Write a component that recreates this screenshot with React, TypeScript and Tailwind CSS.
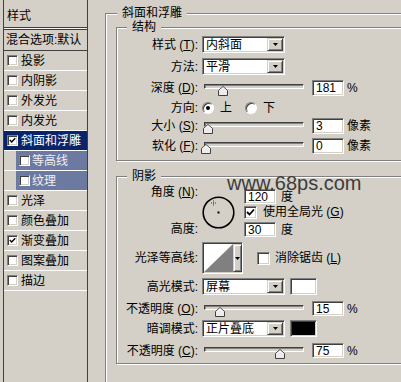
import React from "react";

const sunken =
  "border border-t-[#808080] border-l-[#808080] border-b-white border-r-white shadow-[inset_1px_1px_0_#404040,inset_-1px_-1px_0_#d4d0c8]";
const raised =
  "border border-t-[#d4d0c8] border-l-[#d4d0c8] border-b-[#404040] border-r-[#404040] shadow-[inset_1px_1px_0_#ffffff,inset_-1px_-1px_0_#808080]";

function Check({ size = 9 }: { size?: number }) {
  return (
    <svg width={size} height={size} viewBox="0 0 9 9" className="block">
      <path d="M1 4 L3.5 6.5 L8 1.5" fill="none" stroke="#000" strokeWidth="1.8" />
    </svg>
  );
}

function ListBox({ checked }: { checked?: boolean }) {
  return (
    <div className={`${sunken} w-[11px] h-[11px] bg-white shrink-0 flex items-center justify-center`}>
      {checked ? <Check size={7} /> : null}
    </div>
  );
}

function ListRow({
  label,
  checked,
  selected,
  sub,
}: {
  label: string;
  checked?: boolean;
  selected?: boolean;
  sub?: boolean;
}) {
  const inner = sub
    ? "ml-[12px] bg-[#6c7aa2] text-[#f0f0f0] pl-[3px] gap-[2px]"
    : selected
    ? "bg-[#0a246a] text-white pl-[3px] gap-[3px]"
    : "pl-[3px] gap-[3px]";
  return (
    <div className="h-[20px] border-b border-white flex">
      <div className={`flex-1 flex items-center leading-[14px] ${inner}`}>
        <ListBox checked={checked} />
        <span>{label}</span>
      </div>
    </div>
  );
}

function Label({ children }: { children: React.ReactNode }) {
  return <div className="w-[83px] shrink-0 text-right pr-[2px] leading-[14px] whitespace-nowrap">{children}</div>;
}

function Dropdown({ value }: { value: string }) {
  return (
    <div className={`${sunken} ml-[2px] w-[83px] h-[17px] bg-white flex items-stretch`}>
      <div className="flex-1 pl-[3px] leading-[14px] flex items-center">{value}</div>
      <div className={`${raised} w-[16px] my-[1px] mr-[1px] flex items-center justify-center bg-[#d4d0c8]`}>
        <svg width="5" height="3" viewBox="0 0 5 3" className="block">
          <path d="M0 0 H5 L2.5 3 Z" fill="#000" />
        </svg>
      </div>
    </div>
  );
}

function Field({ value, h = 16, className = "" }: { value: string; h?: number; className?: string }) {
  return (
    <div
      className={`${sunken} w-[32px] bg-white pl-[3px] leading-[14px] flex items-center ${
        h === 16 ? "h-[16px]" : "h-[15px]"
      } ${className}`}
    >
      {value}
    </div>
  );
}

function Slider({ thumb }: { thumb: number }) {
  return (
    <div className="relative ml-[4px] w-[100px] h-full shrink-0">
      <div className="mt-[4px] h-[5px] border border-t-[#404040] border-l-[#404040] border-b-white border-r-white shadow-[inset_1px_1px_0_#808080]" />
      <svg
        width="10"
        height="10"
        viewBox="0 0 10 10"
        className="absolute top-[6px] block"
        style={{ left: thumb }}
      >
        <path d="M5 0.5 L9.5 4.5 V9.5 H0.5 V4.5 Z" fill="#ececec" stroke="#404040" strokeWidth="1" />
        <path d="M1.5 5 L5 1.8 L8.5 5" fill="none" stroke="#ffffff" strokeWidth="1" />
      </svg>
    </div>
  );
}

function Radio({ on }: { on?: boolean }) {
  return (
    <div className="w-[12px] h-[12px] rounded-full border border-t-[#808080] border-l-[#808080] border-b-white border-r-white shadow-[inset_1px_1px_0_#404040] bg-white flex items-center justify-center shrink-0">
      {on ? <div className="w-[4px] h-[4px] rounded-full bg-black" /> : null}
    </div>
  );
}

function Box({ checked, className = "" }: { checked?: boolean; className?: string }) {
  return (
    <div className={`${sunken} w-[13px] h-[13px] bg-white shrink-0 flex items-center justify-center ${className}`}>
      {checked ? <Check size={9} /> : null}
    </div>
  );
}

function Dial() {
  return (
    <svg width="33" height="33" viewBox="0 0 33 33" className="ml-[2px] mt-[7px] block shrink-0">
      <circle cx="16.5" cy="16.5" r="15.3" fill="none" stroke="#000" strokeWidth="1.6" />
      <rect x="15.5" y="15.5" width="2" height="2" fill="#000" />
      <path d="M11.5 4.5 V9.5 M9 7 H14" stroke="#404040" strokeWidth="1" strokeDasharray="1 1" />
    </svg>
  );
}

function Contour() {
  return (
    <div className={`${sunken} ml-[2px] w-[41px] h-[32px] bg-white flex`}>
      <svg width="29" height="28" viewBox="0 0 29 28" preserveAspectRatio="none" className="block mt-[1px] ml-[1px]">
        <rect width="29" height="28" fill="#fff" />
        <path d="M0 28 L29 0 V28 Z" fill="#808080" />
      </svg>
      <div className={`${raised} w-[9px] h-[28px] mt-[1px] flex items-center justify-center bg-[#d4d0c8]`}>
        <svg width="5" height="3" viewBox="0 0 5 3" className="block">
          <path d="M0 0 H5 L2.5 3 Z" fill="#000" />
        </svg>
      </div>
    </div>
  );
}

const group =
  "relative border-t border-l border-[#808080] shadow-[inset_1px_1px_0_#ffffff,1px_1px_0_#ffffff]";
const group2 =
  "relative border border-[#808080] shadow-[inset_1px_1px_0_#ffffff,1px_1px_0_#ffffff]";

export default function App() {
  return (
    <div
      className="relative w-[401px] h-[382px] bg-[#d4d0c8] overflow-hidden flex text-[12px] text-black"
      style={{ fontFamily: '"Liberation Sans", "Noto Sans CJK SC", sans-serif' }}
    >
      {/* left list */}
      <div className="ml-[3px] w-[85px] h-full shrink-0 border-x border-[#404040] flex flex-col">
        <div className="h-[27px] pl-[3px] pt-[9px] leading-[14px]">样式</div>
        <div className="h-[3px] border-y border-[#404040] bg-[#f4f4f4]" />
        <div className="h-[20px] pl-[2px] flex items-center leading-[14px] whitespace-nowrap">混合选项:默认</div>
        <div className="h-px bg-[#404040]" />
        <ListRow label="投影" />
        <ListRow label="内阴影" />
        <ListRow label="外发光" />
        <ListRow label="内发光" />
        <ListRow label="斜面和浮雕" checked selected />
        <ListRow label="等高线" sub />
        <ListRow label="纹理" sub />
        <ListRow label="光泽" />
        <ListRow label="颜色叠加" />
        <ListRow label="渐变叠加" checked />
        <ListRow label="图案叠加" />
        <ListRow label="描边" />
      </div>

      {/* right side */}
      <div className="flex-1 min-w-0">
        <div className={`${group} ml-[17px] mt-[13px] w-[320px] h-[400px]`}>
          <span className="absolute -top-[8px] left-[11px] px-[5px] bg-[#d4d0c8] leading-[14px]">斜面和浮雕</span>

          {/* 结构 */}
          <div className={`${group2} ml-[10px] mt-[13px] w-[320px]`}>
            <span className="absolute -top-[8px] left-[10px] px-[5px] bg-[#d4d0c8] leading-[14px]">结构</span>
            <div className="pt-[8px] pb-[6px]">
              <div className="h-[17px] flex items-center">
                <Label>
                  样式 (<u>T</u>):
                </Label>
                <Dropdown value="内斜面" />
              </div>
              <div className="mt-[5px] h-[17px] flex items-center">
                <Label>方法:</Label>
                <Dropdown value="平滑" />
              </div>
              <div className="mt-[5px] h-[16px] flex items-center">
                <Label>
                  深度 (<u>D</u>):
                </Label>
                <Slider thumb={14} />
                <Field value="181" className="ml-[8px]" />
                <span className="ml-[3px] leading-[14px]">%</span>
              </div>
              <div className="mt-[5px] h-[14px] flex items-center">
                <Label>方向:</Label>
                <div className="ml-[2px]">
                  <Radio on />
                </div>
                <span className="ml-[6px] leading-[14px]">上</span>
                <div className="ml-[13px]">
                  <Radio />
                </div>
                <span className="ml-[6px] leading-[14px]">下</span>
              </div>
              <div className="mt-[3px] h-[16px] flex items-center">
                <Label>
                  大小 (<u>S</u>):
                </Label>
                <Slider thumb={-1} />
                <Field value="3" className="ml-[8px]" />
                <span className="ml-[3px] leading-[14px]">像素</span>
              </div>
              <div className="mt-[4px] h-[16px] flex items-center">
                <Label>
                  软化 (<u>F</u>):
                </Label>
                <Slider thumb={-3} />
                <Field value="0" className="ml-[8px]" />
                <span className="ml-[3px] leading-[14px]">像素</span>
              </div>
            </div>
          </div>

          {/* 阴影 */}
          <div className={`${group2} ml-[10px] mt-[15px] w-[320px]`}>
            <span className="absolute -top-[8px] left-[10px] px-[5px] bg-[#d4d0c8] leading-[14px]">阴影</span>
            <div className="pt-[12px] pb-[5px]">
              <div className="flex h-[48px]">
                <div className="w-[83px] shrink-0 flex flex-col text-right pr-[2px] leading-[14px]">
                  <div className="-mt-[4px] h-[14px]">
                    角度 (<u>N</u>):
                  </div>
                  <div className="mt-auto mb-[1px] h-[14px]">高度:</div>
                </div>
                <Dial />
                <div className="ml-[9px] flex flex-col">
                  <div className="h-[15px] flex items-center">
                    <Field value="120" h={15} />
                    <span className="ml-[5px] leading-[14px]">度</span>
                  </div>
                  <div className="mt-[1px] h-[14px] flex items-center">
                    <Box checked />
                    <span className="ml-[6px] leading-[14px] whitespace-nowrap">
                      使用全局光 (<u>G</u>)
                    </span>
                  </div>
                  <div className="mt-[3px] h-[15px] flex items-center">
                    <Field value="30" h={15} />
                    <span className="ml-[5px] leading-[14px]">度</span>
                  </div>
                </div>
              </div>
              <div className="mt-[5px] h-[32px] flex items-center">
                <Label>光泽等高线:</Label>
                <Contour />
                <Box className="ml-[14px]" />
                <span className="ml-[5px] leading-[14px] whitespace-nowrap">
                  消除锯齿 (<u>L</u>)
                </span>
              </div>
              <div className="mt-[4px] h-[17px] flex items-center">
                <Label>高光模式:</Label>
                <Dropdown value="屏幕" />
                <div className={`${sunken} ml-[5px] w-[27px] h-[17px] bg-white`} />
              </div>
              <div className="mt-[6px] h-[15px] flex items-center">
                <Label>
                  不透明度 (<u>O</u>):
                </Label>
                <Slider thumb={11} />
                <Field value="15" h={15} className="ml-[8px]" />
                <span className="ml-[3px] leading-[14px]">%</span>
              </div>
              <div className="mt-[4px] h-[17px] flex items-center">
                <Label>暗调模式:</Label>
                <Dropdown value="正片叠底" />
                <div className={`${sunken} ml-[5px] w-[27px] h-[17px] bg-black`} />
              </div>
              <div className="mt-[6px] h-[15px] flex items-center">
                <Label>
                  不透明度 (<u>C</u>):
                </Label>
                <Slider thumb={71} />
                <Field value="75" h={15} className="ml-[8px]" />
                <span className="ml-[3px] leading-[14px]">%</span>
              </div>
            </div>
          </div>
        </div>
      </div>

      {/* watermark */}
      <div
        className="absolute left-[227px] top-[177px] text-[20px] leading-[12px] text-[#3c3c3c] pointer-events-none"
        style={{ fontFamily: '"Liberation Sans", Arial, sans-serif' }}
      >
        www.68ps.com
      </div>
    </div>
  );
}
